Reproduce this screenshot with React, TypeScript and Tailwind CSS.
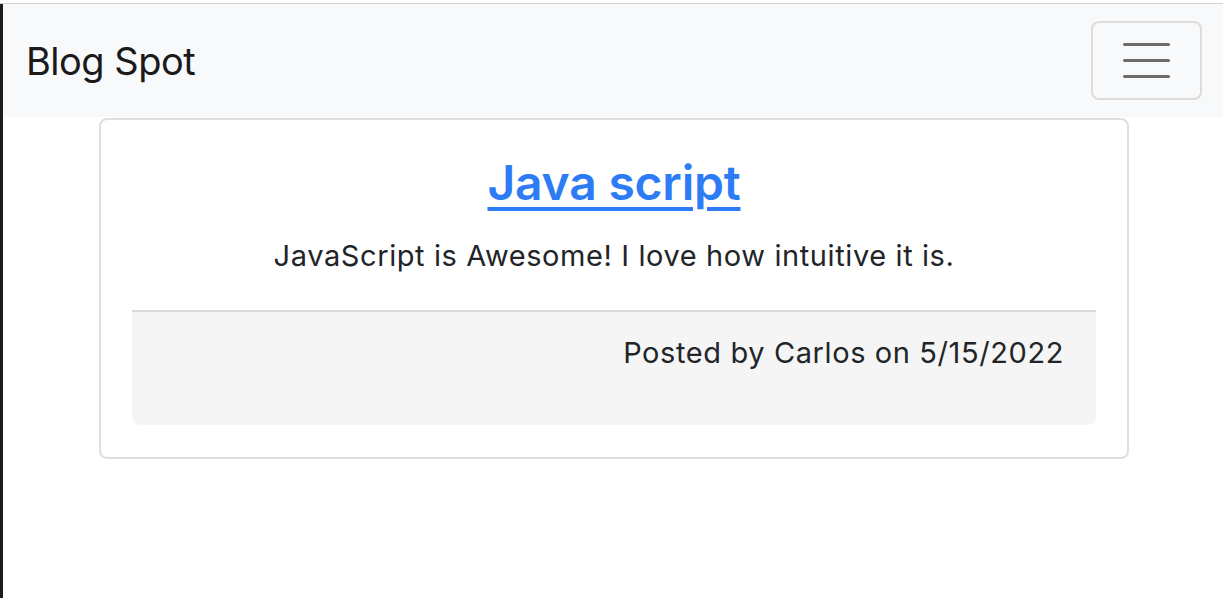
import React from 'react'

// Blog post card under a light navbar
export default function App() {
  return (
    <div className="min-h-[598px] bg-white pt-[3px]" style={{ fontFamily: 'Inter, "Noto Sans", sans-serif' }}>
      <div className="h-[1px] bg-[#d4d4d4]" />
      <div className="flex">
        <div className="w-[3px] min-h-[594px] bg-[#1c1c1c]" />
        <div className="flex-1">
          {/* Navbar */}
          <nav className="flex h-[113px] items-center justify-between bg-[#f8f9fa] pl-[23px] pr-[21px]">
            <span className="text-[38px] leading-none tracking-[-0.5px] text-[#1a1a1a]">Blog Spot</span>
            <button className="flex h-[79px] w-[111px] flex-col items-center justify-center gap-[13px] rounded-[8px] border-2 border-[#dcdcdc]">
              <span className="block h-[3px] w-[47px] rounded-full bg-[#6b6b6b]" />
              <span className="block h-[3px] w-[47px] rounded-full bg-[#6b6b6b]" />
              <span className="block h-[3px] w-[47px] rounded-full bg-[#6b6b6b]" />
            </button>
          </nav>

          {/* Post card */}
          <div className="ml-[96px] mt-[1px] w-[1030px] rounded-[8px] border-2 border-[#dfdfdf] px-[31px] pt-[35px] pb-[32px]">
            <h2 className="text-center">
              <a href="#" className="text-[48px] leading-[56px] font-semibold tracking-[-0.2px] text-[#2d7cf6] underline decoration-[4px] underline-offset-[7px]">
                Java script
              </a>
            </h2>
            <p className="mt-[27px] text-center text-[29px] leading-[36px] tracking-[0.6px] text-[#212529]">
              JavaScript is Awesome! I love how intuitive it is.
            </p>
            <div className="mt-[36px] h-[115px] rounded-b-[8px] border-t-2 border-[#d9d9d9] bg-[#f5f5f5] pr-[32px] pt-[23px] text-right">
              <span className="text-[29px] leading-[36px] tracking-[0.6px] text-[#212529]">Posted by Carlos on 5/15/2022</span>
            </div>
          </div>
        </div>
      </div>
    </div>
  )
}
